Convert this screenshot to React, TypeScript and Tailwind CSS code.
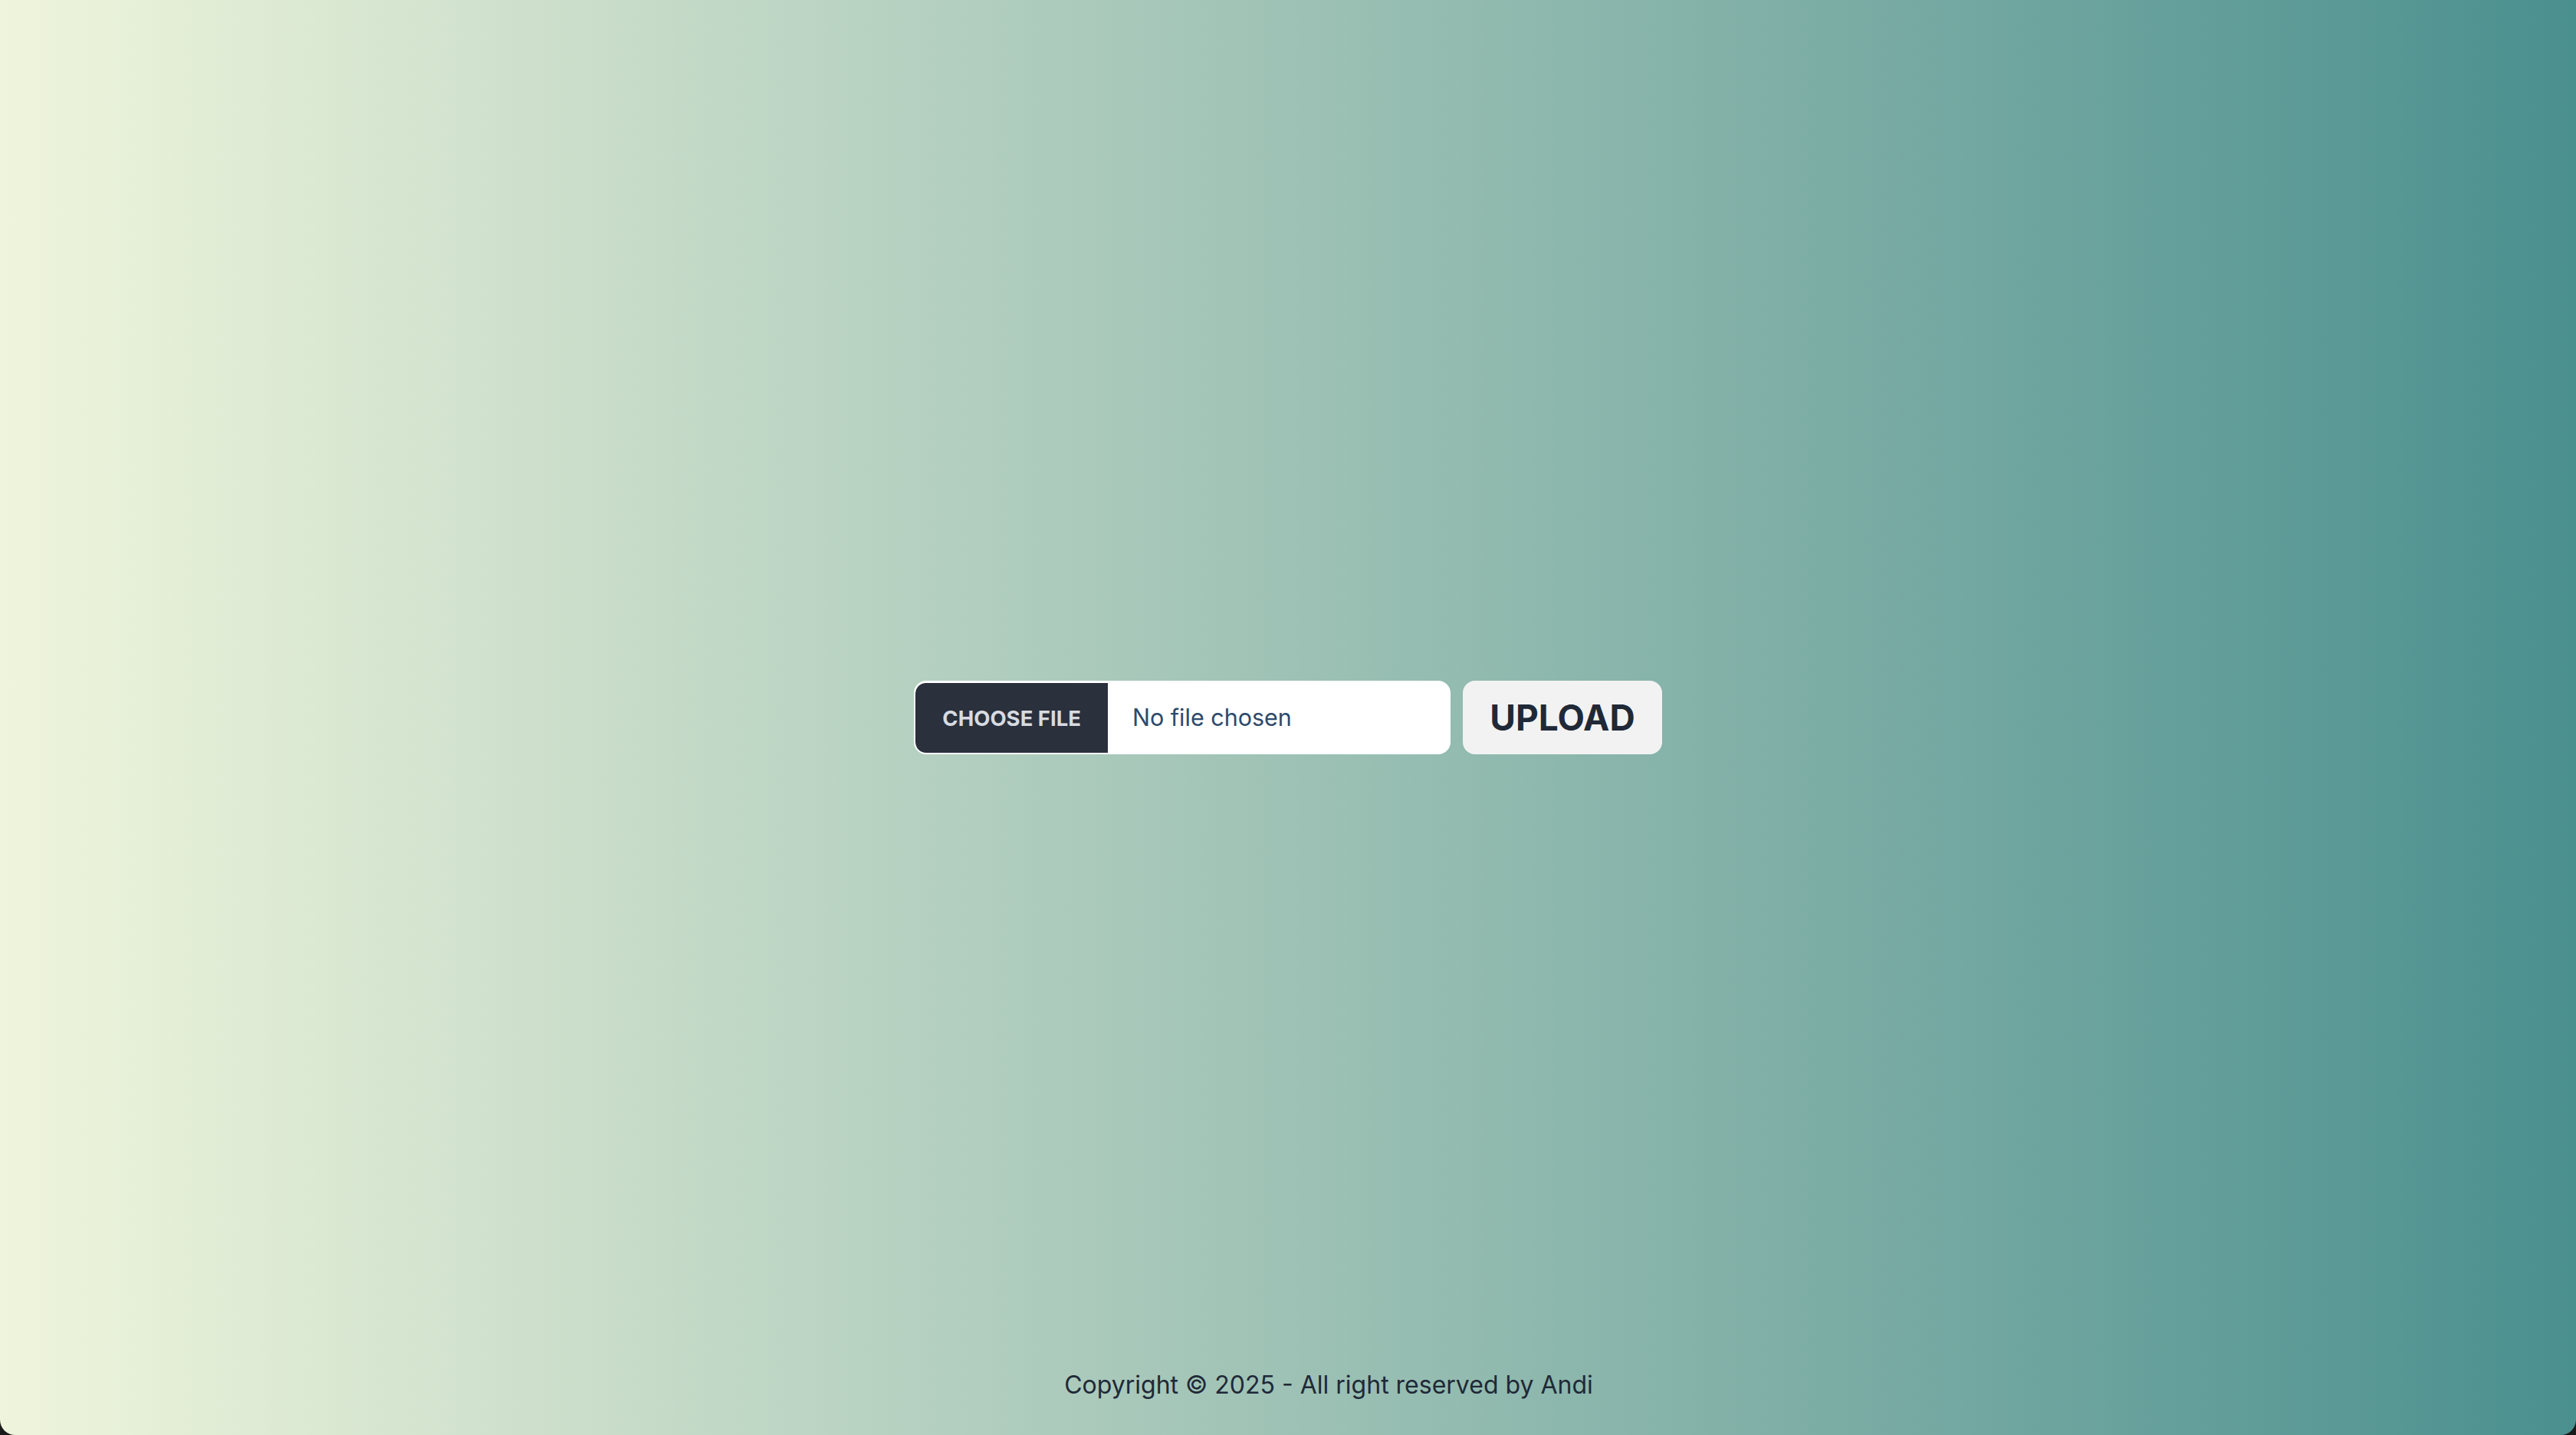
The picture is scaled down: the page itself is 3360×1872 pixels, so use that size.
import React from 'react';

export default function App() {
  return (
    <div className="h-screen w-full bg-[#1a1a1a]">
      <div
        className="flex h-full w-full flex-col rounded-b-[20px] bg-gradient-to-r from-[#eff5dc] to-[#4a908f]"
        style={{ fontFamily: 'Inter, "Noto Sans", sans-serif' }}
      >
        {/* spacer so the form sits in the middle of the screen */}
        <div className="h-[130px]" />

        {/* Upload form */}
        <main className="flex flex-1 items-center justify-center">
          <form className="flex items-center gap-4" onSubmit={(e) => e.preventDefault()}>
            <input
              type="file"
              className="h-[96px] w-[700px] cursor-pointer rounded-[16px] border-2 border-white bg-white text-[30.5px] leading-[92px] text-[#2d4a6b] file:mr-[32px] file:h-[92px] file:cursor-pointer file:rounded-l-[14px] file:border-0 file:bg-[#2a303c] file:px-[35px] file:text-[27.5px] file:font-bold file:uppercase file:text-[#d7dbe0]"
            />
            <button
              type="submit"
              className="h-[96px] rounded-[16px] bg-[#f2f2f2] px-[35px] text-[46px] font-bold text-[#1f2937]"
            >
              UPLOAD
            </button>
          </form>
        </main>

        {/* Footer */}
        <footer className="flex h-[130px] items-center justify-center pl-[106px]">
          <p className="text-[32px] text-[#1f2937]">Copyright © 2025 - All right reserved by Andi</p>
        </footer>
      </div>
    </div>
  );
}
